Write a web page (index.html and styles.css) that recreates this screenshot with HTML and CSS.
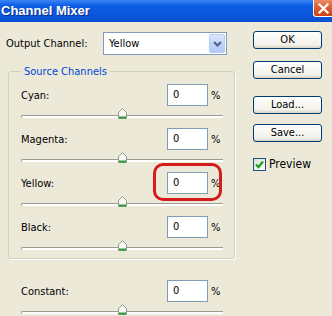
FILE: index.html
```html
<!DOCTYPE html>
<html>

<head>
    <title>Channel Mixer</title>
    <link rel="stylesheet" href="styles.css">
</head>

<body>
    <div class="titlebar">
        <span class="title">Channel Mixer</span>
        <span class="close">
            <svg width="13" height="13" viewBox="0 0 13 13"><path d="M2.5 2.5 L10.5 10.5 M10.5 2.5 L2.5 10.5" stroke="#fff" stroke-width="2.2" stroke-linecap="square" /></svg>
        </span>
    </div>

    <div class="dialog">
        <div class="main">
            <div class="output-row">
                <span class="output-label">Output Channel:</span>
                <div class="select">
                    <span class="select-text">Yellow</span>
                    <span class="drop">
                        <svg width="9" height="6" viewBox="0 0 9 6"><path d="M1 1 L4.5 4.5 L8 1" stroke="#4d6185" stroke-width="2" fill="none" /></svg>
                    </span>
                </div>
            </div>

            <div class="group">
                <div class="legend">Source Channels</div>

                <div class="channel">
                    <div class="row-top">
                        <span class="label">Cyan:</span>
                        <span class="num">0</span>
                        <span class="pct">%</span>
                    </div>
                    <div class="slider"><div class="track"></div><span class="thumb"><svg width="9" height="11" viewBox="0 0 9 11"><path d="M0.5 4.5 L4.5 0.5 L8.5 4.5 L8.5 10.5 L0.5 10.5 Z" fill="#f6f6f2" stroke="#8c9c8c" /><rect x="1" y="8.5" width="7" height="2" fill="#2f9e3a" /></svg></span></div>
                </div>

                <div class="channel">
                    <div class="row-top">
                        <span class="label">Magenta:</span>
                        <span class="num">0</span>
                        <span class="pct">%</span>
                    </div>
                    <div class="slider"><div class="track"></div><span class="thumb"><svg width="9" height="11" viewBox="0 0 9 11"><path d="M0.5 4.5 L4.5 0.5 L8.5 4.5 L8.5 10.5 L0.5 10.5 Z" fill="#f6f6f2" stroke="#8c9c8c" /><rect x="1" y="8.5" width="7" height="2" fill="#2f9e3a" /></svg></span></div>
                </div>

                <div class="channel">
                    <div class="row-top">
                        <span class="label">Yellow:</span>
                        <span class="num">0</span>
                        <span class="pct">%</span>
                        <span class="mark"></span>
                    </div>
                    <div class="slider"><div class="track"></div><span class="thumb"><svg width="9" height="11" viewBox="0 0 9 11"><path d="M0.5 4.5 L4.5 0.5 L8.5 4.5 L8.5 10.5 L0.5 10.5 Z" fill="#f6f6f2" stroke="#8c9c8c" /><rect x="1" y="8.5" width="7" height="2" fill="#2f9e3a" /></svg></span></div>
                </div>

                <div class="channel">
                    <div class="row-top">
                        <span class="label">Black:</span>
                        <span class="num">0</span>
                        <span class="pct">%</span>
                    </div>
                    <div class="slider"><div class="track"></div><span class="thumb"><svg width="9" height="11" viewBox="0 0 9 11"><path d="M0.5 4.5 L4.5 0.5 L8.5 4.5 L8.5 10.5 L0.5 10.5 Z" fill="#f6f6f2" stroke="#8c9c8c" /><rect x="1" y="8.5" width="7" height="2" fill="#2f9e3a" /></svg></span></div>
                </div>
            </div>

            <div class="channel constant">
                <div class="row-top">
                    <span class="label">Constant:</span>
                    <span class="num">0</span>
                    <span class="pct">%</span>
                </div>
                <div class="slider"><div class="track"></div><span class="thumb"><svg width="9" height="11" viewBox="0 0 9 11"><path d="M0.5 4.5 L4.5 0.5 L8.5 4.5 L8.5 10.5 L0.5 10.5 Z" fill="#f6f6f2" stroke="#8c9c8c" /><rect x="1" y="8.5" width="7" height="2" fill="#2f9e3a" /></svg></span></div>
            </div>
        </div>

        <div class="side">
            <div class="btn btn-ok">OK</div>
            <div class="btn btn-cancel">Cancel</div>
            <div class="btn btn-load">Load...</div>
            <div class="btn btn-save">Save...</div>
            <div class="check-row">
                <span class="checkbox">
                    <svg width="9" height="9" viewBox="0 0 9 9"><path d="M1 4.5 L3.5 7 L8 1.5" stroke="#21a121" stroke-width="2.2" fill="none" /></svg>
                </span>
                <span>Preview</span>
            </div>
        </div>
    </div>
</body>

</html>
```

FILE: styles.css
```css
body {
    margin: 0;
    background: #ece9d8;
    font-family: "DejaVu Sans Condensed", "DejaVu Sans", sans-serif;
    font-size: 11px;
    color: #000;
    overflow: hidden;
}

.titlebar {
    height: 22px;
    display: flex;
    align-items: flex-start;
    background: linear-gradient(#3b86f5, #0f5ee6 25%, #0a55dc 70%, #0a4fcf);
}

.title {
    font-family: "Liberation Sans", sans-serif;
    font-weight: bold;
    font-size: 13px;
    color: #fff;
    padding: 3px 0 0 1px;
    text-shadow: 1px 1px 0 #0b2d8a;
}

.close {
    margin-left: auto;
    margin-right: -2px;
    width: 21px;
    height: 17px;
    box-sizing: border-box;
    border: 1px solid #fff;
    border-top: 0;
    border-radius: 0 0 0 3px;
    background: linear-gradient(#ec8a66, #dc5a30 50%, #cc4318);
    display: flex;
    align-items: center;
    justify-content: center;
}

.dialog {
    display: flex;
}

.main {
    width: 240px;
    box-sizing: border-box;
    padding: 10px 0 0 6px;
}

.output-row {
    display: flex;
    align-items: center;
}

.output-label {
    width: 97px;
}

.select {
    width: 124px;
    height: 23px;
    box-sizing: border-box;
    border: 1px solid #7f9db9;
    background: #fff;
    display: flex;
    align-items: center;
    padding: 1px;
}

.select-text {
    flex: 1;
    padding-left: 4px;
}

.drop {
    width: 16px;
    height: 19px;
    box-sizing: border-box;
    border: 1px solid #b7cbf6;
    border-radius: 2px;
    background: linear-gradient(#dbe6fd, #c0d2fb 60%, #b3c8f7);
    display: flex;
    align-items: center;
    justify-content: center;
}

.group {
    margin: 16px 0 0 2px;
    width: 227px;
    box-sizing: border-box;
    border: 1px solid #d0d0bf;
    border-radius: 3px;
    box-shadow: 1px 1px 0 #fff;
    padding: 0 11px 4px 12px;
}

.legend {
    width: fit-content;
    margin-top: -7px;
    padding: 0 3px;
    line-height: 13px;
    background: #ece9d8;
    color: #0046d5;
}

.channel {
    margin-top: 6px;
}

.constant {
    margin: 21px 0 0 15px;
    width: 202px;
}

.row-top {
    position: relative;
    display: flex;
    align-items: center;
    height: 22px;
}

.label {
    flex: 1;
}

.num {
    width: 41px;
    height: 22px;
    box-sizing: border-box;
    border: 1px solid #7f9db9;
    background: #fff;
    padding-left: 5px;
    line-height: 20px;
}

.pct {
    width: 15px;
    box-sizing: border-box;
    padding-left: 3px;
}

.mark {
    position: absolute;
    left: 132px;
    top: -9px;
    width: 69px;
    height: 38px;
    box-sizing: border-box;
    border: 3px solid #d41c1c;
    border-radius: 10px;
}

.slider {
    position: relative;
    height: 16px;
    box-sizing: border-box;
    padding-top: 9px;
}

.track {
    height: 2px;
    border-top: 1px solid #9c9c96;
    border-left: 1px solid #9c9c96;
    border-radius: 2px 0 0 2px;
    background: #fff;
}

.thumb {
    position: absolute;
    left: 97px;
    top: 2px;
    line-height: 0;
}

.side {
    width: 69px;
    margin-left: 13px;
    padding-top: 9px;
}

.btn {
    height: 18px;
    box-sizing: border-box;
    border: 1px solid #003c74;
    border-radius: 3px;
    background: linear-gradient(#fefefe, #f2f1ea 80%, #d8d2c6);
    text-align: center;
    line-height: 16px;
}

.btn-cancel {
    margin-top: 12px;
}

.btn-load {
    margin-top: 17px;
}

.btn-save {
    margin-top: 10px;
}

.check-row {
    margin-top: 15px;
    display: flex;
    align-items: center;
    gap: 3px;
    font-size: 12px;
}

.checkbox {
    width: 13px;
    height: 13px;
    box-sizing: border-box;
    border: 1px solid #1c5180;
    background: linear-gradient(135deg, #dcdcd7, #fff);
    display: flex;
    align-items: center;
    justify-content: center;
}
```
